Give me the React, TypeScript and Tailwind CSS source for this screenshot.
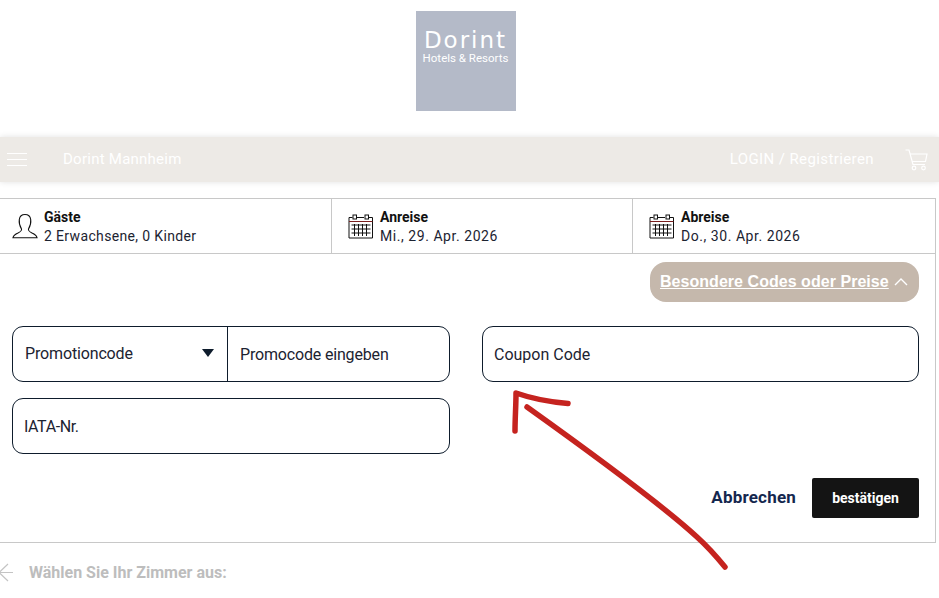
import React from "react";

const CalendarIcon = () => (
  <svg width="25" height="25" viewBox="0 0 25 25" fill="none" stroke="#111" strokeWidth="1" className="shrink-0">
    <path d="M4.500 3.500H1V24H24.500V3.500H21" />
    <path d="M9 3.500H16" />
    <rect x="5" y="1" width="3.500" height="4" />
    <rect x="17" y="1" width="3.500" height="4" />
    <path d="M1 7.500H24.500" stroke="#7a1f1f" />
    <path d="M3.500 11H22.500M3.500 15H22.500M3.500 19H22.500" />
    <path d="M6.500 10V22M10.500 10V22M14.500 10V22M18.500 10V22" />
  </svg>
);

const UserIcon = () => (
  <svg width="26" height="26" viewBox="0 0 26 26" fill="none" stroke="#111" strokeWidth="1.1" className="shrink-0">
    <path d="M9.500 16C7.500 12.500 6.800 10 7.300 6.500C7.800 3 10 1.500 13 1.500C16 1.500 18.200 3 18.700 6.500C19.200 10 18.500 12.500 16.500 16C16 18 18 19 20 20C23 21.300 24.500 22.500 25 24.700H1C1.500 22.500 3 21.300 6 20C8 19 10 18 9.500 16Z" />
  </svg>
);

const InfoCell = ({
  icon,
  title,
  value,
  className,
  valueClass,
}: {
  icon: React.ReactNode;
  title: string;
  value: string;
  className: string;
  valueClass: string;
}) => (
  <div className={`flex items-center ${className}`}>
    {icon}
    <div className="pt-px">
      <p className="text-[14px] leading-[19px] font-bold text-[#111]">{title}</p>
      <p className={`text-[14px] leading-[19px] text-[#1c2331] ${valueClass}`}>{value}</p>
    </div>
  </div>
);

export default function App() {
  return (
    <div className="relative h-[598px] w-[939px] overflow-hidden bg-white font-['Roboto',sans-serif]">
      {/* logo */}
      <div className="flex h-[137px] justify-center pt-[11px] pr-[8px]">
        <div className="flex h-[100px] w-[100px] flex-col items-center bg-[#b4bac8] pt-[17px] text-white">
          <span className="font-['DejaVu_Sans',sans-serif] text-[23px] leading-[24px] tracking-[2px]">Dorint</span>
          <span className="text-[11.5px] leading-[13px] whitespace-nowrap">Hotels &amp; Resorts</span>
        </div>
      </div>

      {/* nav */}
      <div className="flex h-[45px] items-center bg-[#edeae6] pr-[11px] pl-[7px] text-white shadow-[0_0_6px_rgba(0,0,0,0.12)]">
        <div className="flex w-[20px] flex-col gap-[5px]">
          <span className="h-px w-full bg-white" />
          <span className="h-px w-full bg-white" />
          <span className="h-px w-full bg-white" />
        </div>
        <span className="ml-[36px] text-[15px] tracking-[0.25px]">Dorint Mannheim</span>
        <span className="mr-[31px] ml-auto text-[15px] tracking-[0.4px]">LOGIN / Registrieren</span>
        <svg width="23" height="22" viewBox="0 0 23 22" fill="none" stroke="#fff" strokeWidth="1.2">
          <path d="M0.500 1H4L8 15.500H20" />
          <path d="M5 5H22L20.500 12.500H7" />
          <circle cx="9" cy="19" r="1.800" />
          <circle cx="18.500" cy="19" r="1.800" />
        </svg>
      </div>

      {/* booking box */}
      <div className="mt-[16px] -ml-px h-[345px] w-[937px] border border-[#c8c8c8]">
        <div className="flex h-[55px] border-b border-[#c8c8c8]">
          <InfoCell
            className="w-[332px] gap-[6px] border-r border-[#c8c8c8] pl-[12px]"
            icon={<UserIcon />}
            title="Gäste"
            value="2 Erwachsene, 0 Kinder"
            valueClass="tracking-[0.35px]"
          />
          <InfoCell
            className="w-[301px] gap-[7px] border-r border-[#c8c8c8] pl-[16px]"
            icon={<CalendarIcon />}
            title="Anreise"
            value="Mi., 29. Apr. 2026"
            valueClass="tracking-[0.55px]"
          />
          <InfoCell
            className="flex-1 gap-[7px] pl-[16px]"
            icon={<CalendarIcon />}
            title="Abreise"
            value="Do., 30. Apr. 2026"
            valueClass="tracking-[0.55px]"
          />
        </div>

        <div className="flex justify-end pt-[8px] pr-[16px]">
          <div className="flex h-[40px] w-[269px] items-center rounded-[16px] bg-[#c5b8ac] pl-[10px] text-white">
            <span className="font-['Liberation_Sans',sans-serif] text-[16px] font-bold tracking-[0.04px] underline">Besondere Codes oder Preise</span>
            <svg width="14" height="10" viewBox="0 0 14 10" fill="none" stroke="#fff" strokeWidth="1.4" className="ml-[5px]">
              <path d="M1 8L7 2L13 8" />
            </svg>
          </div>
        </div>

        <div className="flex gap-[32px] pt-[24px] pl-[12px] text-[16px] text-[#1c2331]">
          <div className="flex w-[438px] flex-col gap-[16px]">
            <div className="flex h-[56px] rounded-[11px] border border-[#0e1c2c]">
              <div className="flex w-[215px] items-center border-r border-[#0e1c2c] pr-[13px] pb-px pl-[12px]">
                <span className="tracking-[-0.15px]">Promotioncode</span>
                <span className="mt-[-2px] ml-auto h-0 w-0 border-x-[6.5px] border-t-[8px] border-x-transparent border-t-[#0e1c2c]" />
              </div>
              <div className="flex flex-1 items-center pt-px pl-[12px] tracking-[-0.17px]">Promocode eingeben</div>
            </div>
            <div className="flex h-[56px] items-center rounded-[11px] border border-[#0e1c2c] pt-px pl-[11px]">
              <span className="tracking-[-0.4px]">IATA-Nr.</span>
            </div>
          </div>
          <div className="flex h-[56px] w-[437px] items-center rounded-[11px] border border-[#0e1c2c] pt-px pl-[11px]">
            Coupon Code
          </div>
        </div>

        <div className="flex items-center justify-end gap-[16px] pt-[24px] pr-[16px]">
          <span className="text-[17px] font-bold tracking-[0.2px] text-[#14274e]">Abbrechen</span>
          <div className="flex h-[40px] w-[107px] items-center justify-center rounded-[2px] bg-[#141414] text-[14px] font-bold text-white">
            bestätigen
          </div>
        </div>
      </div>

      {/* back row */}
      <div className="flex items-center pt-[18px]">
        <svg width="14" height="20" viewBox="0 0 14 20" fill="none" stroke="#c4c4c4" strokeWidth="1.2">
          <path d="M13 9.500H-2M8 1L-1 9.500L8 18" />
        </svg>
        <span className="ml-[15px] text-[16px] font-bold text-[#bdbdbd]">Wählen Sie Ihr Zimmer aus:</span>
      </div>

      {/* hand-drawn arrow over the page */}
      <svg width="939" height="598" viewBox="0 0 939 598" fill="none" className="pointer-events-none absolute top-0 left-0">
        <path
          d="M515 431C515 418 516 406 516 393C533 399 550 402 568 403.500"
          stroke="#c5231f"
          strokeWidth="5.500"
          strokeLinecap="round"
          strokeLinejoin="round"
        />
        <path
          d="M527 407C590 452 660 503 697 537C707 546 716 556 725 567"
          stroke="#c5231f"
          strokeWidth="5.500"
          strokeLinecap="round"
        />
      </svg>
    </div>
  );
}
